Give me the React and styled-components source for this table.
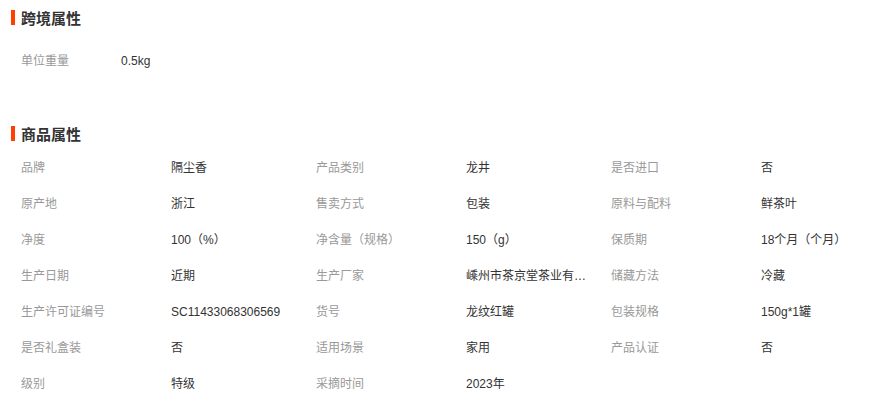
import React from 'react';
import styled, { createGlobalStyle } from 'styled-components';

const GlobalStyle = createGlobalStyle`
  body {
    margin: 0;
    background: #fff;
    font-family: "Liberation Sans", "Noto Sans CJK SC", sans-serif;
  }
`;

const crossBorder = [{ label: '单位重量', value: '0.5kg' }];

const goodsAttrs = [
  { label: '品牌', value: '隔尘香' },
  { label: '产品类别', value: '龙井' },
  { label: '是否进口', value: '否' },
  { label: '原产地', value: '浙江' },
  { label: '售卖方式', value: '包装' },
  { label: '原料与配料', value: '鲜茶叶' },
  { label: '净度', value: '100（%）' },
  { label: '净含量（规格）', value: '150（g）' },
  { label: '保质期', value: '18个月（个月）' },
  { label: '生产日期', value: '近期' },
  { label: '生产厂家', value: '嵊州市茶京堂茶业有限公司' },
  { label: '储藏方法', value: '冷藏' },
  { label: '生产许可证编号', value: 'SC11433068306569' },
  { label: '货号', value: '龙纹红罐' },
  { label: '包装规格', value: '150g*1罐' },
  { label: '是否礼盒装', value: '否' },
  { label: '适用场景', value: '家用' },
  { label: '产品认证', value: '否' },
  { label: '级别', value: '特级' },
  { label: '采摘时间', value: '2023年' },
];

const Page = styled.div`
  width: 884px;
  height: 411px;
  overflow: hidden;
`;

const Section = styled.section`
  margin-bottom: ${(props) => props.gap || 0}px;
`;

const Title = styled.h3`
  display: flex;
  align-items: center;
  height: 34px;
  margin: 0;
  padding-left: 11px;
  font-size: 15px;
  font-weight: bold;
  color: #333;
  &::before {
    content: '';
    display: block;
    width: 4px;
    height: 15px;
    margin-right: 6px;
    background: #ff4000;
  }
`;

const Grid = styled.div`
  display: grid;
  grid-template-columns: ${(props) => props.cols};
  padding: ${(props) => props.top || 0}px 0 0 21px;
`;

const Item = styled.div`
  display: flex;
  align-items: center;
  height: 36px;
  font-size: 12px;
  line-height: 16px;
`;

const Label = styled.span`
  flex: none;
  width: ${(props) => props.w}px;
  color: #999;
`;

const Value = styled.span`
  max-width: 126px;
  color: #333;
  white-space: nowrap;
  overflow: hidden;
  text-overflow: ellipsis;
`;

const AttrList = ({ items, cols, labelWidth, top }) => (
  <Grid cols={cols} top={top}>
    {items.map((item) => (
      <Item key={item.label}>
        <Label w={labelWidth}>{item.label}</Label>
        <Value>{item.value}</Value>
      </Item>
    ))}
  </Grid>
);

export default function App() {
  return (
    <Page>
      <GlobalStyle />
      <Section gap={37}>
        <Title>跨境属性</Title>
        <AttrList items={crossBorder} cols="300px" labelWidth={100} top={9} />
      </Section>
      <Section>
        <Title>商品属性</Title>
        <AttrList items={goodsAttrs} cols="295px 295px 295px" labelWidth={150} />
      </Section>
    </Page>
  );
}
